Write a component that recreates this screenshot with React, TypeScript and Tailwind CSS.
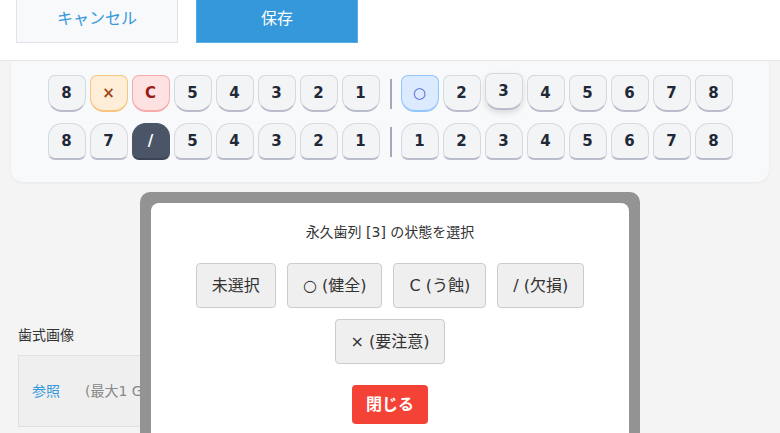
import React, { useState } from "react";

type Status = "none" | "ok" | "caries" | "missing" | "watch";

type Tooth = { label: string; status: Status };

const STATUS_STYLE: Record<Status, string> = {
  none: "bg-[#f3f4f6] border-[#d5d8df] border-b-[#b9bdcb] text-[#1f2937]",
  ok: "bg-[#dbeafe] border-[#93c5fd] border-b-[#93c5fd] text-[#4a63d0] font-normal",
  caries: "bg-[#fee2e2] border-[#f8a9a9] border-b-[#f8a9a9] text-[#9b1c1c]",
  missing: "bg-[#4a5568] border-[#4a5568] border-b-[#3b4454] text-white",
  watch: "bg-[#feeed8] border-[#f8c47f] border-b-[#f8c47f] text-[#a1461a]",
};

const SYMBOL: Record<Status, string | null> = {
  none: null,
  ok: "○",
  caries: "C",
  missing: "/",
  watch: "×",
};

function t(label: string, status: Status = "none"): Tooth {
  return { label, status };
}

const upperRight = [t("8"), t("7", "watch"), t("6", "caries"), t("5"), t("4"), t("3"), t("2"), t("1")];
const upperLeft = [t("1", "ok"), t("2"), t("3"), t("4"), t("5"), t("6"), t("7"), t("8")];
const lowerRight = [t("8"), t("7"), t("6", "missing"), t("5"), t("4"), t("3"), t("2"), t("1")];
const lowerLeft = [t("1"), t("2"), t("3"), t("4"), t("5"), t("6"), t("7"), t("8")];

function ToothButton({ tooth, upper, raised }: { tooth: Tooth; upper: boolean; raised?: boolean }) {
  const shape = upper ? "rounded-t-[7px] rounded-b-[14px]" : "rounded-t-[14px] rounded-b-[7px]";
  return (
    <button
      className={`w-[38px] h-[37px] border border-b-2 flex items-center justify-center font-bold text-[15px] ${shape} ${STATUS_STYLE[tooth.status]} ${
        raised ? "-translate-y-[2px] shadow-[0_3px_6px_rgba(0,0,0,0.12)]" : ""
      }`}
    >
      {SYMBOL[tooth.status] ?? tooth.label}
    </button>
  );
}

function ToothRow({ right, left, upper, hover }: { right: Tooth[]; left: Tooth[]; upper: boolean; hover?: number }) {
  return (
    <div className="flex items-center justify-center">
      <div className="flex gap-[4px]">
        {right.map((tooth, i) => (
          <ToothButton key={i} tooth={tooth} upper={upper} />
        ))}
      </div>
      <div className="w-[2px] h-[30px] bg-[#a3a8ba] ml-[10px] mr-[9px]" />
      <div className="flex gap-[4px]">
        {left.map((tooth, i) => (
          <ToothButton key={i} tooth={tooth} upper={upper} raised={hover === i} />
        ))}
      </div>
    </div>
  );
}

const OPTIONS = ["未選択", "○ (健全)", "C (う蝕)", "/ (欠損)", "× (要注意)"];

export default function App() {
  const [open, setOpen] = useState(true);

  return (
    <div
      className="relative min-h-screen bg-[#f4f4f4] overflow-hidden"
      style={{ fontFamily: '"DejaVu Sans", "Noto Sans CJK JP", sans-serif' }}
    >
      <header className="flex gap-[18px] bg-white border-b border-[#e6e6e6] px-[16px] pb-[17px]">
        <button className="w-[162px] h-[48px] -mt-[5px] bg-[#f8f9fa] border border-[#dfe2e6] text-[#3498db] text-[16px]">
          キャンセル
        </button>
        <button className="w-[162px] h-[48px] -mt-[5px] bg-[#3498db] border border-[#5aaee6] text-white text-[16px]">
          保存
        </button>
      </header>

      <div className="px-[11px]">
        <div className="bg-[#f8f9fa] rounded-b-[12px] shadow-[0_1px_3px_rgba(0,0,0,0.06)] pt-[14px] pb-[22px] flex flex-col gap-[11px]">
          <ToothRow right={upperRight} left={upperLeft} upper hover={2} />
          <ToothRow right={lowerRight} left={lowerLeft} upper={false} />
        </div>
      </div>

      <section className="px-[18px] mt-[143px]">
        <div className="text-[14px] leading-[20px] text-[#333]">歯式画像</div>
        <div className="mt-[10px] w-[360px] h-[72px] bg-[#efefef] border border-[#e0e0e0] flex items-center px-[13px] gap-[25px] text-[14px]">
          <span className="text-[#3498db]">参照</span>
          <span className="text-[#888]">(最大1 GB まで)</span>
        </div>
      </section>

      {open && (
        <div className="absolute left-[140px] top-[192px] w-[500px] bg-[#939393] rounded-[10px] p-[11px]">
          <div className="bg-white rounded-[8px] px-[20px] pt-[19px] pb-[30px] flex flex-col items-center">
            <div className="text-[14px] leading-[20px] text-[#333]">永久歯列 [3] の状態を選択</div>
            <div className="mt-[21px] flex flex-wrap justify-center gap-[11px]">
              {OPTIONS.map((o) => (
                <button
                  key={o}
                  className="h-[45px] px-[15px] bg-[#efefef] border border-[#cccccc] rounded-[4px] text-[16px] text-[#333]"
                >
                  {o}
                </button>
              ))}
            </div>
            <button
              onClick={() => setOpen(false)}
              className="mt-[21px] h-[39px] px-[14px] bg-[#f44336] rounded-[4px] text-white font-bold text-[16px]"
            >
              閉じる
            </button>
          </div>
        </div>
      )}
    </div>
  );
}
